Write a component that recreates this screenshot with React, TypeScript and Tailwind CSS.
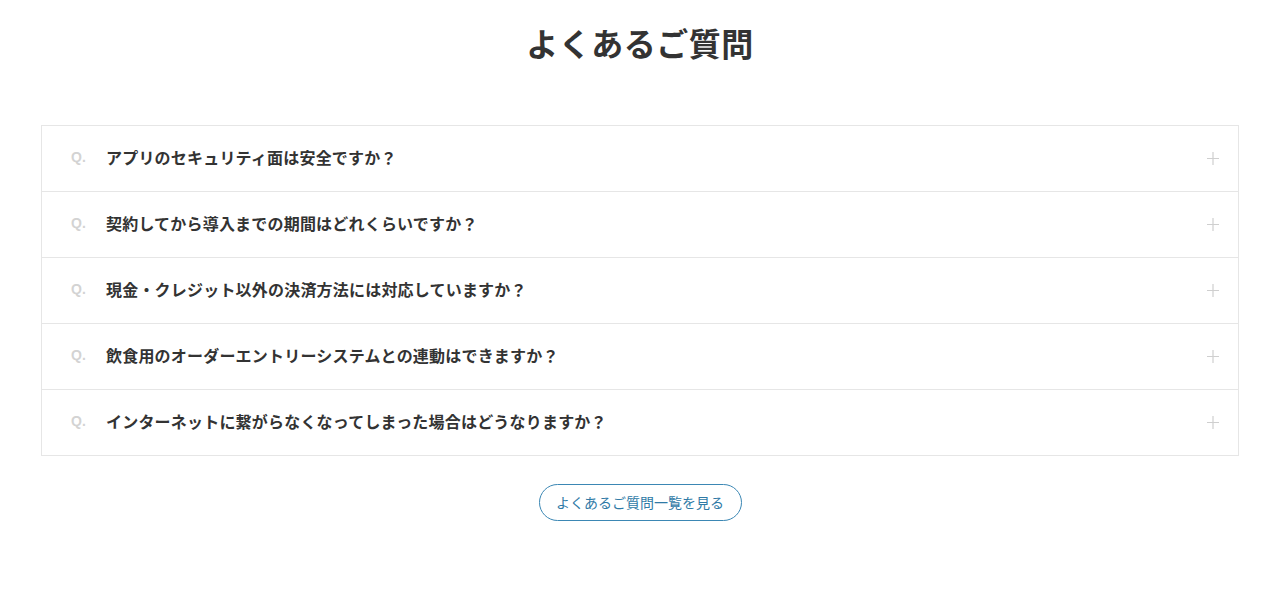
import React from "react";

const questions = [
  "アプリのセキュリティ面は安全ですか？",
  "契約してから導入までの期間はどれくらいですか？",
  "現金・クレジット以外の決済方法には対応していますか？",
  "飲食用のオーダーエントリーシステムとの連動はできますか？",
  "インターネットに繋がらなくなってしまった場合はどうなりますか？",
];

export default function App() {
  return (
    <div
      className="w-[1280px] h-[610px] bg-white text-[#333]"
      style={{ fontFamily: '"Noto Sans CJK JP", "Noto Sans", sans-serif' }}
    >
      <h2 className="pt-[18px] text-center text-[32px] leading-[48px] font-bold tracking-[0.5px] text-[#333]">
        よくあるご質問
      </h2>
      <div className="mx-[41px] mt-[59px] border border-[#e6e6e6]">
        {questions.map((q, i) => (
          <div
            key={i}
            className={`box-content flex items-center h-[65px] pl-[29px] pr-[19px] ${
              i > 0 ? "border-t border-[#e6e6e6]" : ""
            }`}
          >
            <div className="flex items-center flex-1 pb-[3px]">
              <span
                className="w-[35px] text-[14px] font-bold text-[#d3d3d3]"
                style={{ fontFamily: '"Liberation Sans", Arial, sans-serif' }}
              >
                Q.
              </span>
              <span className="flex-1 text-[16px] font-bold text-[#333] tracking-[0.2px]">
                {q}
              </span>
            </div>
            <svg width="12" height="13" viewBox="0 0 12 13" className="shrink-0">
              <path d="M6 0v13M0 6.5h12" stroke="#cfcfcf" strokeWidth="1.2" />
            </svg>
          </div>
        ))}
      </div>
      <div className="flex justify-center mt-[28px]">
        <a
          href="#"
          className="flex items-center justify-center w-[203px] h-[37px] rounded-full border border-[#3b87b4] text-[14px] text-[#2f7aa6] pb-[1px]"
        >
          よくあるご質問一覧を見る
        </a>
      </div>
    </div>
  );
}
